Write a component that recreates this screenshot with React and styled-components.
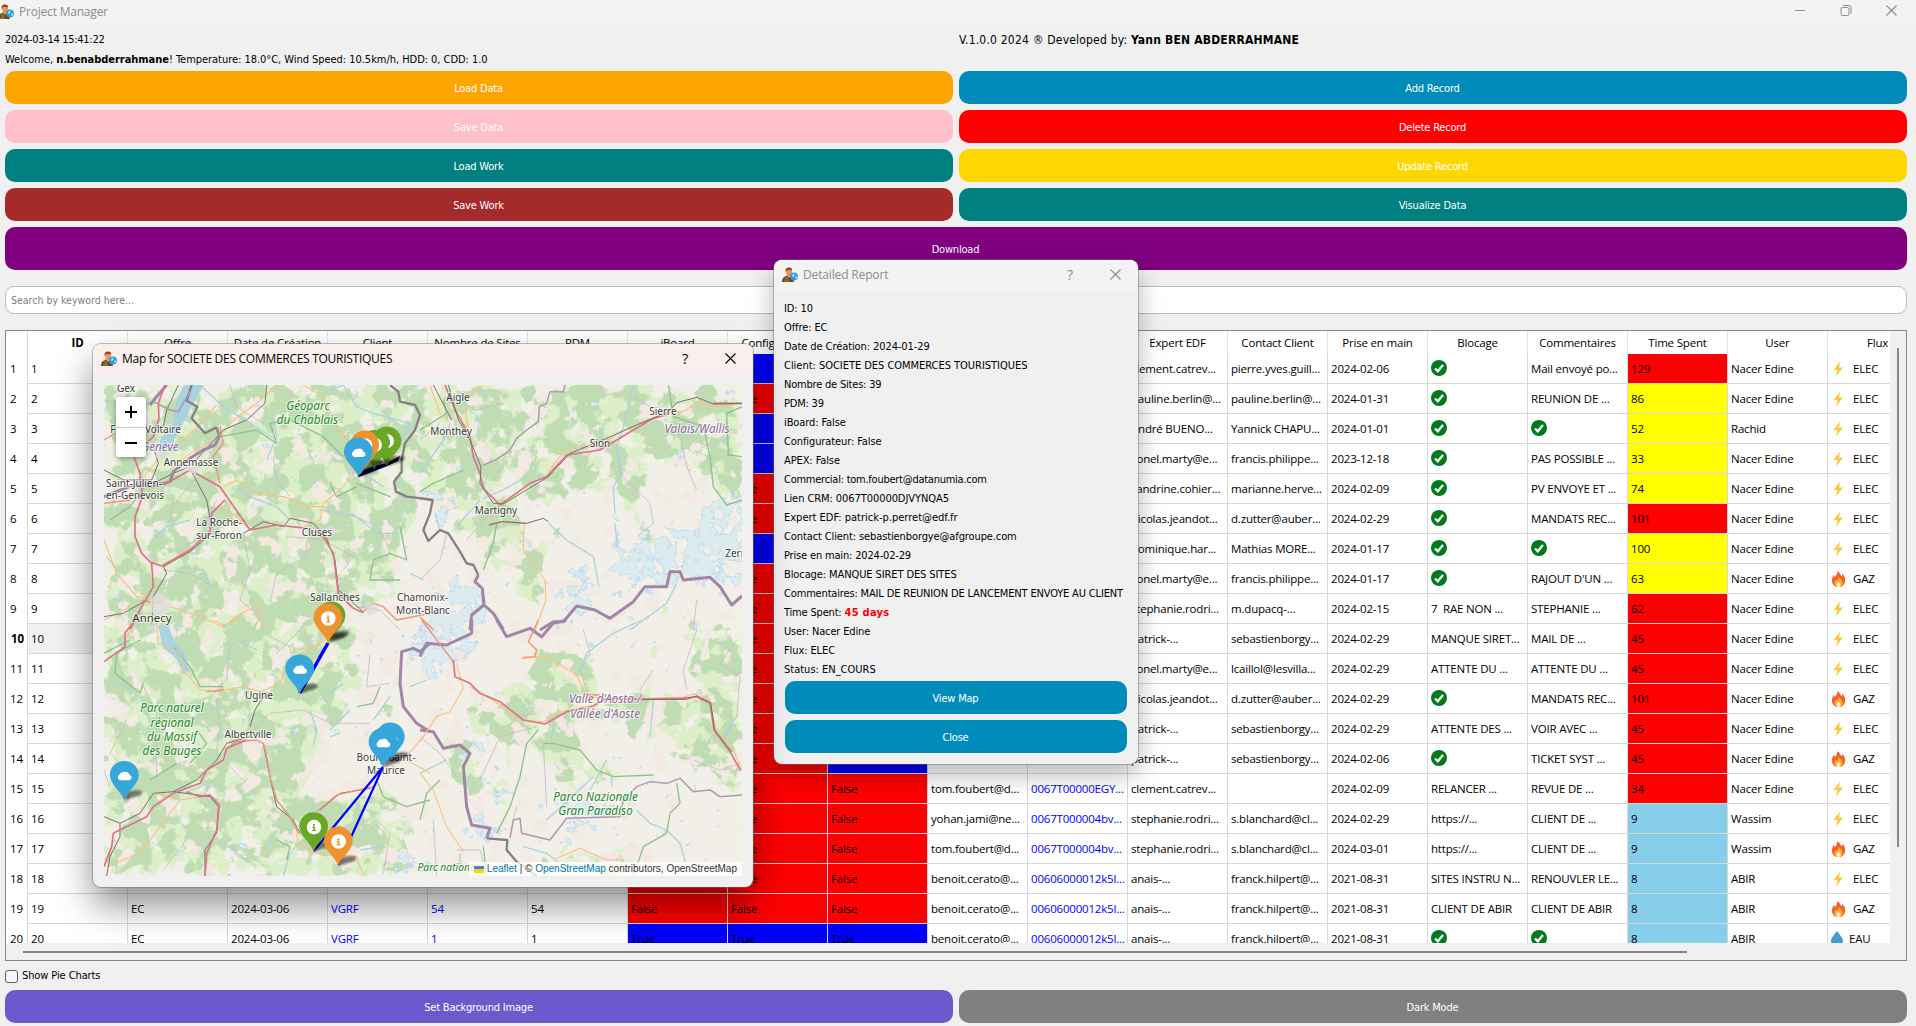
import React from "react";
import styled, { createGlobalStyle } from "styled-components";

const tahoma = `"DejaVu Sans Condensed", "DejaVu Sans", sans-serif`;
const segoe = `"Open Sans", "Noto Sans", sans-serif`;

const GlobalStyle = createGlobalStyle`
  * { box-sizing: border-box; }
  body { margin: 0; background: #f0f0f0; overflow: hidden; }
`;

/* ---------- window ---------- */
const Window = styled.div`
  position: relative;
  width: 1916px;
  height: 1026px;
  display: flex;
  flex-direction: column;
  overflow: hidden;
  background: #f0f0f0;
  color: #000;
  font: 11px/18px ${tahoma};
  letter-spacing: -0.3px;
  white-space: nowrap;
`;
const TitleBar = styled.header`
  height: 23px;
  flex: none;
  display: flex;
  align-items: center;
  background: #f3f3f3;
  color: #8c8c8c;
  font: 12px/22px ${segoe};
  letter-spacing: -0.2px;
`;
const TitleIcon = styled.span`
  display: flex;
  margin: 0 5px 0 -2px;
`;
const TitleText = styled.span`
  flex: 1;
`;
const WindowButtons = styled.div`
  display: flex;
  gap: 34px;
  padding: 0 19px 3px 0;
`;
const Content = styled.main`
  display: flex;
  flex-direction: column;
  padding: 8px 9px 3px 5px;
`;
const InfoGrid = styled.div`
  display: grid;
  grid-template-columns: 1fr 1fr;
  grid-template-rows: 20px 20px;
  column-gap: 6px;
  height: 40px;
`;
const Info = styled.div`
  line-height: 18px;
`;
const Welcome = styled(Info)`
  letter-spacing: -0.04px;
`;
const Version = styled(Info)`
  font-size: 12px;
  letter-spacing: 0.2px;
`;
const ButtonGrid = styled.div`
  display: grid;
  grid-template-columns: 1fr 1fr;
  gap: 6px;
`;
const Button = styled.button`
  height: ${(p) => p.$h || 33}px;
  grid-column: ${(p) => (p.$wide ? "1 / -1" : "auto")};
  border: 0;
  padding: 2px 1px 0 0;
  border-radius: 10px;
  background: ${(p) => p.$bg};
  color: #fff;
  font: 11px/18px ${tahoma};
  letter-spacing: -0.2px;
`;
const Search = styled.div`
  height: 28px;
  margin: 16px 0;
  padding: 0 5px;
  display: flex;
  align-items: center;
  border: 1px solid #bdbdbd;
  border-radius: 9px;
  background: #fff;
  color: #808080;
  font-size: 10.5px;
  letter-spacing: 0;
`;

/* ---------- table ---------- */
const TableFrame = styled.section`
  height: 631px;
  border: 1px solid #828790;
  display: grid;
  grid-template-columns: 1884px 1fr;
  grid-template-rows: 612px 1fr;
`;
const Viewport = styled.div`
  overflow: hidden;
  background: #fff;
  font: 11.5px/26px ${segoe};
  letter-spacing: -0.19px;
`;
const VScroll = styled.div`
  display: flex;
  justify-content: flex-start;
  padding: 17px 0 0 7px;
`;
const VThumb = styled.i`
  width: 2px;
  height: 499px;
  background: #868686;
`;
const HScroll = styled.div`
  padding: 8px 0 0 17px;
`;
const HThumb = styled.i`
  display: block;
  width: 1664px;
  height: 2px;
  background: #868686;
`;
const Row = styled.div`
  display: flex;
  width: 1922px;
  height: ${(p) => (p.$head ? 23 : 30)}px;
`;
const RowNumber = styled.div`
  width: 22px;
  padding-top: 2px;
  border-right: 1px solid #d8d8d8;
  font-weight: ${(p) => (p.$bold ? 700 : 400)};
  padding-left: ${(p) => (p.$bold ? 5 : 4)}px;
`;
const HeadCell = styled.div`
  width: 100px;
  border-right: 1px solid #e5e5e5;
  text-align: center;
  line-height: 24px;
  font-weight: ${(p) => (p.$bold ? 700 : 400)};
`;
const Cell = styled.div`
  width: 100px;
  padding: 1.500px 0 0 3px;
  border-right: 1px solid #d8d8d8;
  border-bottom: 1px solid #d8d8d8;
  background: ${(p) => p.$bg || "transparent"};
  color: ${(p) => (p.$link ? "#0000ff" : "#000")};
  overflow: hidden;
  white-space: pre;
`;
const FluxCell = styled(Cell)`
  display: flex;
  align-items: center;
  padding-top: 0;
  gap: ${(p) => (p.$tight ? 6 : 7)}px;
`;
const CheckMark = styled.span`
  display: flex;
  height: 25px;
  align-items: center;
`;

/* ---------- footer ---------- */
const CheckRow = styled.label`
  height: 29px;
  display: flex;
  align-items: center;
  gap: 4px;
  padding-top: 1px;
  letter-spacing: -0.1px;
`;
const Box = styled.span`
  width: 13px;
  height: 13px;
  border: 1px solid #5c5c5c;
  border-radius: 3px;
  background: #f5f5f5;
`;

/* ---------- dialogs ---------- */
const Dialog = styled.section`
  position: absolute;
  left: ${(p) => p.$x}px;
  top: ${(p) => p.$y}px;
  width: ${(p) => p.$w}px;
  height: ${(p) => p.$h}px;
  border-radius: 8px;
  overflow: hidden;
  background: #f0f0f0;
  box-shadow: 0 0 0 1px rgba(110, 110, 110, 0.45), ${(p) => p.$shadow};
`;
const DialogBar = styled.header`
  height: 30px;
  display: flex;
  align-items: center;
  padding: 0 17px 1px 8px;
  background: ${(p) => (p.$active ? "#f9f0ee" : "#f3f3f3")};
  color: ${(p) => (p.$active ? "#000" : "#8c8c8c")};
  font: 12px/28px ${segoe};
  letter-spacing: ${(p) => (p.$active ? "-0.28px" : "-0.15px")};
`;
const DialogTitle = styled.span`
  flex: 1;
  padding-left: 5px;
`;
const Help = styled.span`
  font-size: 14px;
  margin-right: 37px;
`;
const MapBody = styled.div`
  padding: 11px;
`;
const MapView = styled.div`
  position: relative;
  width: 638px;
  height: 491px;
  overflow: hidden;
`;
const ZoomBox = styled.div`
  position: absolute;
  left: 12px;
  top: 12px;
  width: 30px;
  display: grid;
  grid-template-rows: 30px 30px;
  border-radius: 3px;
  background: #fff;
  box-shadow: 0 1px 5px rgba(0, 0, 0, 0.4);
`;
const ZoomKey = styled.span`
  display: grid;
  place-items: center;
  & + & { border-top: 1px solid #ccc; }
`;
const Attribution = styled.div`
  position: absolute;
  right: 0;
  bottom: 0;
  height: 14px;
  padding: 0 5px;
  display: flex;
  align-items: center;
  background: rgba(255, 255, 255, 0.8);
  color: #333;
  font: 10px/14px "Liberation Sans", Arial, sans-serif;
  letter-spacing: 0;
  white-space: pre;
`;
const Flag = styled.i`
  width: 10px;
  height: 7px;
  margin-right: 3px;
  background: linear-gradient(#4c7be1 50%, #ffd500 50%);
`;
const Anchor = styled.span`
  color: #0078a8;
`;
const ReportBody = styled.div`
  display: flex;
  flex-direction: column;
  padding: 9px 11px 11px;
`;
const ReportLine = styled.div`
  height: 19px;
  line-height: 19px;
  margin-left: -1px;
  letter-spacing: ${(p) => p.$ls}px;
`;
const Days = styled.b`
  color: #ff0000;
  letter-spacing: 0.3px;
`;
const Actions = styled.div`
  display: grid;
  gap: 6px;
  padding-top: 2px;
`;

/* ---------- icons ---------- */
const AppIcon = () => (
  <svg width="16" height="16" viewBox="0 0 16 16">
    <path d="M0 15c0-3 1-5 4-6l2-1 4 1 2 6H0z" fill="#6b4420" />
    <path d="M3 10l3-1 1 6H2z" fill="#8a6b2c" />
    <path d="M5 8l2 3 2-2V7H5z" fill="#d9a06c" />
    <path d="M4 4c0-2 1.500-3 3-3s3 1 3 3-1 5-3 5-3-3-3-5z" fill="#e8955a" />
    <path d="M3.800 5C3 2 4.500.6 7 .5c2 0 3.500 1 3.200 3L8 3 5 3z" fill="#a23c1a" />
    <circle cx="12" cy="9.500" r="3.900" fill="#2e9bd6" />
    <path d="M10 8l2-1.500 1 1-1 2-2 .5zM13 10l2-1v2l-2 1z" fill="#9fdcf5" />
  </svg>
);
const CloseIcon = ({ color }) => (
  <svg width="11" height="11" viewBox="0 0 11 11">
    <path d="M.5.5l10 10M10.500.5l-10 10" stroke={color} strokeWidth="1.100" />
  </svg>
);
const Ok = () => (
  <CheckMark>
    <svg width="16" height="16" viewBox="0 0 16 16">
      <circle cx="8" cy="8" r="8" fill="#007a1c" />
      <path d="M4 8.500l2.800 2.800L12 5" fill="none" stroke="#fff" strokeWidth="2.300" />
    </svg>
  </CheckMark>
);
const FluxIcon = ({ kind }) => {
  if (kind === "ELEC")
    return (
      <svg width="15" height="16" viewBox="0 0 15 16">
        <path d="M9 .5L2.500 9h4L5 15.500 12 6.500H8z" fill="#ffc83d" />
      </svg>
    );
  if (kind === "GAZ")
    return (
      <svg width="15" height="16" viewBox="0 0 15 16">
        <path d="M6 .3c3 1 3 3.200 4.500 5 .8-.5.800-1.500.500-2.500C14 5 14.500 8 14 10.500 13.500 14 11 16 7.500 16S1.500 14 1 10.500C.6 7.500 2 6 2.300 4c1 .5 1.400 1.300 1.500 2.200C5.500 4.500 6.600 2.500 6 .3z" fill="#f3622a" />
        <path d="M7.500 6c2.500 2 4 3.500 4 6 0 2.300-1.500 4-4 4s-4-1.700-4-4c0-1.500.5-2.500 1.300-3.500.4.800.7 1.200 1.300 1.500C7 9 7.700 7.500 7.500 6z" fill="#ffb02e" />
        <path d="M7.500 11c1.300 1 2 2 2 3s-.8 2-2 2-2-1-2-2 .7-2 2-3z" fill="#fff1c9" />
      </svg>
    );
  return (
    <svg width="12" height="16" viewBox="0 0 12 16">
      <path d="M6 0c3 4 6 7 6 10a6 6 0 0 1-12 0C0 7 3 4 6 0z" fill="#3f9fd0" />
    </svg>
  );
};

/* ---------- map ---------- */
const inks = {
  motorway: ["#e0708a", 5],
  trunk: ["#f28f77", 4],
  primary: ["#fac183", 3.5],
  minor: ["#c3bdc0", 2.5],
  rail: ["#77706f", 3],
  river: ["#aad3df", 4],
  border: ["#a187a5", 9],
  thinBorder: ["#ae98b3", 4.5],
  limit: ["#858085", 7],
  park: ["#8fc28a", 4],
};
const Lines = ({ kind, d }) => (
  <path d={d} fill="none" stroke={inks[kind][0]} strokeWidth={inks[kind][1]} strokeLinejoin="round" />
);
const Tile = ({ x, y, children }) => <g transform={`translate(${x} ${y}) scale(.33333)`}>{children}</g>;

const places = [
  ["Gex", 126, 392], ["Annemasse", 191, 466], ["Saint-Julien-", 134, 487], ["en-Genevois", 135, 499],
  ["La Roche-", 219, 526], ["sur-Foron", 219, 538.5], ["Cluses", 317, 536], ["Sallanches", 335, 601],
  ["Annecy", 152, 621.500, 11.5], ["Chamonix-", 422.500, 601], ["Mont-Blanc", 423, 613.5], ["Aigle", 458, 401],
  ["Monthey", 451, 435], ["Martigny", 496, 514], ["Sion", 600, 446.500], ["Sierre", 663, 414.500],
  ["Zermatt", 744, 556.500], ["Ugine", 259, 699], ["Albertville", 248, 737.500],
  ["Bourg-Saint-", 386, 761], ["Maurice", 386, 773.5],
];
const regions = [
  ["Géoparc", 308, 410, "#1e8b28"], ["du Chablais", 307.5, 424, "#1e8b28"],
  ["Parc naturel", 172, 712, "#1e8b28"], ["régional", 172, 726.500, "#1e8b28"], ["du Massif", 172, 741, "#1e8b28"], ["des Bauges", 172, 755, "#1e8b28"],
  ["Parco Nazionale", 595.5, 800.500, "#1e8b28"], ["Gran Paradiso", 595.5, 815, "#1e8b28"],
  ["Genève", 160, 451, "#8d6a9b"], ["Valais/Wallis", 697, 433, "#8d6a9b"],
  ["Valle d'Aosta /", 605, 703, "#8d6a9b"], ["Vallée d'Aoste", 605, 718, "#8d6a9b"],
  ["Parc national", 448, 871, "#1e8b28", 10.3],
];
const pins = [
  [387, 466, "#6ba624", "moon"], [374.3, 469.300, "#6ba624", "info"], [364.700, 470, "#ee9230", "info"], [358.300, 477, "#37a6db", "cloud"],
  [331, 640.800, "#6ba624", "info"], [328, 643, "#ee9230", "info"],
  [299.700, 693.800, "#37a6db", "cloud"], [124.3, 800.3, "#37a6db", "cloud"],
  [390.300, 762, "#37a6db", "cloud"], [383, 767.3, "#37a6db", "cloud"],
  [313.7, 851.600, "#6ba624", "info"], [338.300, 866, "#ee9230", "info"],
];
const Pin = ({ x, y, color, glyph }) => (
  <g transform={`translate(${x} ${y})`}>
    <path d="M0 0L16-5Q21-9 14-10L3-9Z" fill="#000" opacity=".5" filter="url(#soft)" />
    <path d="M0 0C-3-9-14.400-16-14.400-25A14.400 14.400 0 0 1 14.400-25C14.400-16 3-9 0 0Z" fill={color} />
    {glyph === "cloud" && <path d="M-4-20a3 3 0 0 1-1-5.500 3.500 3.500 0 0 1 4-2.500 4 4 0 0 1 6 2.500 2.800 2.800 0 0 1 0 5.500z" fill="#fff" />}
    {glyph === "info" && (
      <>
        <circle cx=".3" cy="-24.5" r="7.300" fill="#fff" />
        <path d="M-.8-27.500h2v1.700h-2zM-1.500-25.200h2.700v3.500h1.100v1.200h-3.900v-1.200h1.100v-2.300h-1z" fill={color} />
      </>
    )}
    {glyph === "moon" && <path d="M0-32a7 7 0 0 1 0 14q4-3 3-7t-3-7z" fill="#fff" />}
  </g>
);
const Terrain = ({ id, seed, freq, density, color }) => (
  <filter id={id} x="0" y="0" width="100%" height="100%" colorInterpolationFilters="sRGB">
    <feTurbulence type="fractalNoise" baseFrequency={freq} numOctaves="5" seed={seed} result="n" />
    <feGaussianBlur in="SourceAlpha" stdDeviation="7" result="s" />
    <feComposite in="n" in2="s" operator="arithmetic" k1="0" k2=".8" k3=".3" k4="0" />
    <feComponentTransfer result="t">
      <feFuncA type="linear" slope="22" intercept={-22 * density} />
    </feComponentTransfer>
    <feFlood floodColor={color} />
    <feComposite in2="t" operator="in" />
  </filter>
);
const Frame = () => <rect x="104" y="385" width="638" height="491" fill="none" />;
const west = "M104 385H425L440 430 400 470 420 500 400 560 395 600 355 620 350 660 385 680 350 700 320 760 300 790 340 800 375 770 400 800 420 876H104Z";
const alps = "M430 385H742V500L700 480 660 460 640 490 655 560 640 545 610 480 570 500 510 500 550 560 540 610 500 570 470 540 440 520 415 470Z";
const aosta = "M455 700L520 690 540 640 590 660 600 700 650 690 690 690 690 620 742 620V800L680 760 650 730 570 720 600 760 640 790 560 780 520 740 500 830 490 790 510 740 470 730Z M550 860L640 850 640 876H540Z M440 740L480 740 480 800 450 790Z";
const ice = "M440 590L475 570 490 600 475 650 440 680 415 670 400 640 420 620Z M560 570L590 565 595 610 565 625Z M610 550L690 520 742 480 742 590 680 580 650 590 615 580Z M460 740H480V760H465Z M560 800H620V815L560 840Z M480 815L500 825 495 845 462 840Z M490 790H510V803H485Z M410 850L440 860 410 876H385Z M430 480L450 490 445 530 425 520Z";

const MapDrawing = () => (
  <svg width="638" height="491" viewBox="104 385 638 491">
    <defs>
      <Terrain id="meadow" seed="4" freq=".05" density={0.62} color="#dcefc8" />
      <Terrain id="forest" seed="11" freq=".04" density={0.655} color="#c0dcb3" />
      <Terrain id="iceEdge" seed="21" freq=".08" density={0.615} color="#a3cdf5" />
      <Terrain id="iceFill" seed="21" freq=".08" density={0.635} color="#dcebee" />
      <Terrain id="rock" seed="31" freq=".045" density={0.79} color="#f2e9e2" />
      <filter id="soft" x="-30%" y="-30%" width="160%" height="160%"><feGaussianBlur stdDeviation="1.300" /></filter>
    </defs>
    <rect x="104" y="385" width="638" height="491" fill="#f2efe9" />
    {["meadow", "forest"].map((f) => (
      <g key={f} filter={`url(#${f})`}>
        <Frame />
        <path d={`${west}${alps}${aosta}`} />
      </g>
    ))}
    <g filter="url(#rock)"><Frame /><rect x="104" y="385" width="638" height="491" /></g>
    <g filter="url(#iceEdge)"><Frame /><path d={ice} /></g>
    <g filter="url(#iceFill)"><Frame /><path d={ice} /></g>

    <path d="M184 385L176 402 172 425 160 440 158 455 170 447 182 425 194 402 204 385Z" fill="#aad3df" />
    <path d="M158 625L163 648 176 658 183 672 189 671 186 655 174 640 168 625Z" fill="#aad3df" />

    <Tile x={90} y={340}>
      <Lines kind="minor" d="M42 180L90 190 150 260M160 410L110 500 60 540M420 135L440 200 520 250M260 640L330 590 380 480M460 580L480 690 450 780 510 830 490 870M310 420L240 510 250 560M600 470L560 420 550 350M370 740L300 700 220 690M650 600L650 650 560 700 540 790M700 600L790 650 760 690M110 800L170 830 130 870M800 800L870 810 930 870M590 590L720 600M780 520L860 560 890 610" />
      <Lines kind="river" d="M190 600L230 560 300 540M330 135L400 200 560 300M700 160L760 135 800 200 850 220 960 250 930 310M600 540L560 500 480 470 440 440M690 510L800 530 860 580 930 580M270 680L340 690 360 730M530 360L560 290 550 240M820 400L880 440M50 650L90 700M960 700L1000 720" />
      <Lines kind="park" d="M390 290L500 270 560 310 540 250 600 240 700 290 760 350M800 440L740 470 720 430M930 720L840 720 850 660 900 640 950 660 930 560M800 430L900 470 850 450M180 420L120 500 60 540" />
      <Lines kind="primary" d="M560 135L500 190 430 240 380 300 300 340 240 390M380 195L330 250 280 300 220 340 160 410M640 135L700 170 740 260 790 320 800 390 760 440 700 490 690 540 640 560M400 440L440 420 500 460 580 470 660 500 720 500M480 570L440 530 390 500M42 600L80 700 140 770 200 780 240 800M240 800L330 830 400 860 440 830 500 795 520 870M42 840L120 800M220 680L260 650 340 600" />
      <Lines kind="trunk" d="M155 780L200 790 230 770M820 815L850 790 880 800 920 840 1020 820M390 260L400 310 370 350 390 430M42 490L120 480M42 300L110 260" />
      <Lines kind="rail" d="M530 135L525 190 470 240 400 270 300 380 250 400 190 430M190 320L205 370 185 420 100 420 42 390M300 385L350 480 365 560M460 580L520 545 580 560 600 535 670 550 710 595 735 660 745 750 820 815M265 135L230 210 220 260M185 850L190 770 230 700 220 680 300 635 365 580M42 830L100 820 170 780" />
      <Lines kind="border" d="M230 135L200 170 180 195M300 355L340 330 375 315 388 290 380 262M300 355L250 395 240 425 190 440 130 435 42 470" />
      <Lines kind="limit" d="M305 135L290 182 322 200 305 235 345 280 380 262M900 135L925 155 930 185 975 195 990 225 975 270 945 310 935 360 935 395 912 425 918 455 950 470 1020 478" />
      <Lines kind="thinBorder" d="M190 185L240 210 265 215 300 155" />
      <Lines kind="motorway" d="M225 135L205 190 207 235 190 290 130 345 150 400 157 470 135 530 135 590 155 640 185 670 190 740 155 800 120 870M157 430L230 430 300 390 390 440 480 570 560 555 650 565 700 590 730 640 745 760 790 805 820 818M405 480L365 520 360 575 300 630 215 678 185 668" />
    </Tile>
    <Tile x={420} y={340}>
      <Lines kind="minor" d="M250 190L170 210 130 190M590 320L600 400 690 490 700 550 650 590M770 250L800 380 830 450M0 300L60 250M140 600L210 520M520 330L470 380M640 170L740 230M80 580L60 660 0 720M830 780L820 870" />
      <Lines kind="river" d="M640 135L610 260 590 320 605 400 580 440 585 520M190 475L250 450 320 410M385 550L440 600 520 650 537 740M0 400L70 300 90 250M585 550L592 620M550 250L540 330M110 560L180 480M770 730L740 790 630 870M180 380L140 340M45 520L60 570M910 300L930 330 920 350" />
      <Lines kind="park" d="M745 135L760 230 850 260 870 350 880 440 920 495 966 480M966 350L925 345 920 220 966 200M0 455L40 430 130 390M230 550L220 610 190 690M0 270L80 220 70 180" />
      <Lines kind="thinBorder" d="M435 135L430 155 390 155 380 190 358 200 355 245 320 270 290 295 270 330 230 358 190 375" />
      <Lines kind="limit" d="M0 475L38 480 30 520 10 570 25 603 60 570 85 580 120 635 140 670 160 675 175 705" />
      <Lines kind="border" d="M175 705L165 725 187 745 192 795 155 825 150 870M192 795L220 820 250 868M360 870L400 845 430 845 470 798 525 810 570 835 640 785 675 740 740 740 750 695 780 695 790 720 870 712 900 740 935 795 966 768" />
      <Lines kind="primary" d="M30 135L60 220 90 245M135 200L145 270M190 135L130 180M385 395L440 325 540 320 600 275 660 250 730 225 800 210 830 185 880 200 966 190M312 548L310 630 375 720 378 780 345 870M210 540L245 480" />
      <Lines kind="trunk" d="M207 555L245 545 320 550M0 830L40 870" />
      <Lines kind="motorway" d="M75 135L105 210 150 290 160 350 180 400 190 445 240 495 330 430 380 410 440 345 540 330 640 270 700 235 745 222M880 190L966 190" />
      <Lines kind="rail" d="M40 135L95 240M85 135L115 240 150 300 183 380 180 430 220 490 250 492 385 410 450 340 560 295 650 255 745 215 770 188 830 172 880 192 966 190M207 555L245 545 320 550 370 535 385 545" />
    </Tile>
    <Tile x={90} y={620}>
      <Lines kind="minor" d="M110 300L60 400 100 440M160 200L200 280 200 480M380 240L390 330 380 390M540 50L600 80 610 150M420 60L410 180 370 220M490 330L540 280 640 270 720 310 840 310M290 660L220 750M560 100L640 20M600 700L640 660 700 700M820 560L900 640 880 760M840 100L830 200 900 190M60 500L42 450M380 400L460 480M430 700L500 740" />
      <Lines kind="river" d="M75 180L150 230 190 330M660 270L680 330 670 380M690 240L760 190M720 330L780 270M850 300L900 230M440 60L500 90M525 390L540 470M600 700L580 768M810 690L880 680M960 200L1010 180M280 520L380 480M390 660L470 720M750 340L720 350" />
      <Lines kind="park" d="M250 80L300 140 330 200 400 200M320 330L350 370 300 430M150 60L80 100 75 160 150 220 160 190M800 260L850 250 870 200M860 480L880 530 950 560 1020 540M560 660L600 680 590 720M42 100L120 60M260 430L180 480" />
      <Lines kind="border" d="M1020 70L990 95 970 85 935 95 930 190 940 260 980 310 1020 335" />
      <Lines kind="primary" d="M200 0L205 70 270 100 280 150 330 210 380 215 460 200 510 215 570 190 590 140M370 0L400 15 450 0M620 110L720 50M130 20L100 60M50 740L150 700 270 540 200 520M270 540L330 530M620 640L625 670 680 700 800 710 820 768M950 420L1020 460M940 420L1000 350M42 720L60 700M700 0L750 20" />
      <Lines kind="rail" d="M42 590L90 610 150 580 190 520 250 515 320 480 380 420 410 370 480 350M90 610L90 650 60 710 50 768M250 515L360 530 385 560 380 640 345 690 345 768M480 320L495 270 520 230M520 370L540 470 560 560 610 600 630 640M690 570L750 520 840 505" />
      <Lines kind="trunk" d="M410 385L440 365 500 360 520 370 530 410 540 470 560 540 600 590 625 640M680 575L740 525 850 500M350 215L400 210" />
      <Lines kind="motorway" d="M135 0L105 40 105 80 42 125M42 740L65 680 70 640 100 625 170 590 190 560 250 520 330 490 350 450 400 420 410 385 470 360M290 515L330 530 360 525 388 555 380 630 350 700 345 768" />
    </Tile>
    <Tile x={420} y={620}>
      <Lines kind="minor" d="M350 320L240 350 180 480M370 370L380 560M500 210L480 150 510 100 490 30M800 210L790 150 830 30M660 210L700 150M950 60L900 130 960 170 950 290 910 360M0 350L60 400 110 470M820 420L900 450 960 430M290 290L350 280M40 600L50 768M290 560L280 600M110 690L180 690 200 768" />
      <Lines kind="river" d="M665 0L580 40 500 100 480 150M700 240L690 350M910 350L940 300M510 510L560 420M575 470L575 500M650 570L690 610 740 630 780 670 800 740M310 680L380 700 420 730M0 460L80 420M400 320L395 360M120 700L120 740M380 600L520 470" />
      <Lines kind="park" d="M370 370L400 370 480 390 530 450 580 470 700 465M355 330L320 370 300 470 270 560 230 640M770 490L780 550 750 580 740 640 670 680 640 768M0 600L20 520 60 480M200 768L190 680" />
      <Lines kind="border" d="M155 0L155 40 80 75 20 70 0 110M230 0L260 50 330 25 365 50 400 10 440 0M0 330L40 335 70 385 120 375 150 400 130 440 140 560 155 615 210 625 200 655" />
      <Lines kind="limit" d="M200 655L262 660 260 690 290 725 350 768" />
      <Lines kind="thinBorder" d="M270 655L280 600 300 595 305 640 390 660 440 595 600 590 610 540 650 500 690 485 740 490 780 475 820 515 870 510 900 530 966 525" />
      <Lines kind="primary" d="M0 365L50 290 90 275 130 205 110 130M150 200L250 260 290 300 370 305 440 270M310 110L390 115 470 165 500 230 560 235M0 460L40 510 80 620 130 695M690 235L790 232 820 222 870 240 885 320 940 390 966 450M400 720L480 685 560 720 610 718" />
      <Lines kind="trunk" d="M5 0L100 125M355 0L325 65 350 90 345 110 305 115M500 225L540 225" />
      <Lines kind="motorway" d="M100 120L105 170 150 190 180 220 240 245 310 300 375 312 440 275 520 258 560 235 670 238 790 235 830 230 870 250 882 330 930 395 962 452" />
      <Lines kind="rail" d="M670 238L800 238 830 228 872 248 884 330 935 395" />
    </Tile>
    <g fill="#dfdcdc">
      <path d="M150 600l8-8 10 4 3 12-10 8-10-4zM183 460l10 2 8 6-6 6-10-4zM158 450l10 4-4 6-8-3zM320 530l12-4 8 6-12 4zM365 600l10 4 3 8-10 4z" opacity=".8" />
    </g>

    <g fontFamily="'Noto Sans', 'Open Sans', sans-serif" textAnchor="middle" stroke="#fff" strokeOpacity=".65" strokeWidth="2.200" paintOrder="stroke" strokeLinejoin="round" letterSpacing="0">
      {regions.map(([t, x, y, c, s]) => <text key={t} x={x} y={y} fontSize={s || 11.7} fontStyle="italic" fill={c}>{t}</text>)}
      {places.map(([t, x, y, s]) => <text key={t} x={x} y={y} fontSize={s || 10} fill="#3c3c3c">{t}</text>)}
      <text x="145.500" y="433" fontSize="10" fill="#3c3c3c">Ferney-Voltaire</text>
    </g>

    <g stroke="#0000ff" strokeWidth="2.200" fill="none">
      <path d="M358 476L387 465M383 767L313.700 851M383 767L338.300 865" />
      <path d="M328 643L299.700 693" strokeWidth="3.500" />
    </g>
    <path d="M358.300 477L364 470 374 466 387 463 400 456 398 461 387 466Z" fill="#00003c" />
    {pins.map(([x, y, c, g], i) => <Pin key={i} x={x} y={y} color={c} glyph={g} />)}
  </svg>
);

/* ---------- data ---------- */
const actions = [
  ["Load Data", "#ffa500"], ["Add Record", "#008cba"],
  ["Save Data", "#ffc0cb"], ["Delete Record", "#ff0000"],
  ["Load Work", "#008080"], ["Update Record", "#ffd700"],
  ["Save Work", "#a52a2a"], ["Visualize Data", "#008080"],
];
const columns = ["ID", "Offre", "Date de Création", "Client", "Nombre de Sites", "PDM", "iBoard", "Configurateur", "APEX", "Commercial", "Lien CRM", "Expert EDF", "Contact Client", "Prise en main", "Blocage", "Commentaires", "Time Spent", "User", "Flux"];
const OK = "ok";
const N = "Nacer Edine";
const R = "#ff0000", Y = "#ffff00", S = "#87ceeb";
const anais = ["benoit.cerato@...", "00606000012k5l...", "anais-...", "franck.hilpert@..."];
/* configurateur, apex, commercial, crm, expert, contact, prise, blocage, commentaires, days, colour, user, flux */
const records = [
  [1, 0, "", "", "clement.catrev...", "pierre.yves.guill...", "2024-02-06", OK, "Mail envoyé po...", 129, R, N, "ELEC"],
  [0, 0, "", "", "pauline.berlin@...", "pauline.berlin@...", "2024-01-31", OK, "REUNION DE ...", 86, Y, N, "ELEC"],
  [1, 0, "", "", "André BUENO...", "Yannick CHAPU...", "2024-01-01", OK, OK, 52, Y, "Rachid", "ELEC"],
  [1, 0, "", "", "lionel.marty@e...", "francis.philippe...", "2023-12-18", OK, "PAS POSSIBLE ...", 33, Y, N, "ELEC"],
  [0, 0, "", "", "sandrine.cohier...", "marianne.herve...", "2024-02-09", OK, "PV ENVOYE ET ...", 74, Y, N, "ELEC"],
  [0, 0, "", "", "nicolas.jeandot...", "d.zutter@auber...", "2024-02-29", OK, "MANDATS REC...", 101, R, N, "ELEC"],
  [1, 0, "", "", "dominique.har...", "Mathias MORE...", "2024-01-17", OK, OK, 100, Y, N, "ELEC"],
  [0, 0, "", "", "lionel.marty@e...", "francis.philippe...", "2024-01-17", OK, "RAJOUT D'UN ...", 63, Y, N, "GAZ"],
  [0, 0, "", "", "stephanie.rodri...", "m.dupacq-...", "2024-02-15", "7  RAE NON ...", "STEPHANIE ...", 62, R, N, "ELEC"],
  [0, 0, "", "", "patrick-...", "sebastienborgy...", "2024-02-29", "MANQUE SIRET...", "MAIL DE ...", 45, R, N, "ELEC"],
  [0, 0, "", "", "lionel.marty@e...", "lcaillol@lesvilla...", "2024-02-29", "ATTENTE DU ...", "ATTENTE DU ...", 45, R, N, "ELEC"],
  [0, 0, "", "", "nicolas.jeandot...", "d.zutter@auber...", "2024-02-29", OK, "MANDATS REC...", 101, R, N, "GAZ"],
  [0, 0, "", "", "patrick-...", "sebastienborgy...", "2024-02-29", "ATTENTE DES ...", "VOIR AVEC ...", 45, R, N, "ELEC"],
  [0, 1, "", "", "patrick-...", "sebastienborgy...", "2024-02-06", OK, "TICKET SYST ...", 45, R, N, "GAZ"],
  [0, 0, "tom.foubert@d...", "0067T00000EGY...", "clement.catrev...", "", "2024-02-09", "RELANCER ...", "REVUE DE ...", 34, R, N, "ELEC"],
  [0, 0, "yohan.jami@ne...", "0067T000004bv...", "stephanie.rodri...", "s.blanchard@cl...", "2024-02-29", "https://...", "CLIENT DE ...", 9, S, "Wassim", "ELEC"],
  [0, 0, "tom.foubert@d...", "0067T000004bv...", "stephanie.rodri...", "s.blanchard@cl...", "2024-03-01", "https://...", "CLIENT DE ...", 9, S, "Wassim", "GAZ"],
  [0, 0, ...anais, "2021-08-31", "SITES INSTRU N...", "RENOUVLER LE...", 8, S, "ABIR", "ELEC"],
  [0, 0, ...anais, "2021-08-31", "CLIENT DE ABIR", "CLIENT DE ABIR", 8, S, "ABIR", "GAZ"],
  [1, 1, ...anais, "2021-08-31", OK, OK, 8, S, "ABIR", "EAU"],
];
const sites = { 19: "54", 20: "1" };
const BoolCell = ({ on }) => <Cell $bg={on ? "#0000ff" : "#ff0000"}>{on ? "True" : "False"}</Cell>;

const Record = ({ n, r }) => {
  const [conf, apex, com, crm, expert, contact, prise, bloc, comment, days, tone, user, flux] = r;
  const shown = n > 18;
  return (
    <Row>
      <RowNumber $bold={n === 10}>{n}</RowNumber>
      <Cell $bg={n === 10 ? "#f0f0f0" : undefined}>{n}</Cell>
      <Cell>{shown && "EC"}</Cell>
      <Cell>{shown && "2024-03-06"}</Cell>
      <Cell $link>{shown && "VGRF"}</Cell>
      <Cell $link>{sites[n]}</Cell>
      <Cell>{sites[n]}</Cell>
      <BoolCell on={n === 20} />
      <BoolCell on={conf} />
      <BoolCell on={apex} />
      <Cell>{com}</Cell>
      <Cell $link>{crm}</Cell>
      <Cell>{expert}</Cell>
      <Cell>{contact}</Cell>
      <Cell>{prise}</Cell>
      <Cell>{bloc === OK ? <Ok /> : bloc}</Cell>
      <Cell>{comment === OK ? <Ok /> : comment}</Cell>
      <Cell $bg={tone}>{days}</Cell>
      <Cell>{user}</Cell>
      <FluxCell $tight={flux === "EAU"}><FluxIcon kind={flux} />{flux}</FluxCell>
    </Row>
  );
};

const report = [
  ["ID: 10", -0.1], ["Offre: EC", -0.1], ["Date de Création: 2024-01-29", -0.09], ["Client: SOCIETE DES COMMERCES TOURISTIQUES", -0.03],
  ["Nombre de Sites: 39", -0.2], ["PDM: 39", -0.2], ["iBoard: False", -0.1], ["Configurateur: False", -0.1], ["APEX: False", -0.1],
  ["Commercial: tom.foubert@datanumia.com", -0.25], ["Lien CRM: 0067T00000DJVYNQA5", -0.07], ["Expert EDF: patrick-p.perret@edf.fr", 0],
  ["Contact Client: sebastienborgye@afgroupe.com", -0.11], ["Prise en main: 2024-02-29", -0.17], ["Blocage: MANQUE SIRET DES SITES", -0.1],
  ["Commentaires: MAIL DE REUNION DE LANCEMENT ENVOYE AU CLIENT", -0.16],
];

export default function App() {
  return (
    <Window>
      <GlobalStyle />
      <TitleBar>
        <TitleIcon><AppIcon /></TitleIcon>
        <TitleText>Project Manager</TitleText>
        <WindowButtons>
          <svg width="12" height="11"><path d="M1 5.500h10" stroke="#8c8c8c" /></svg>
          <svg width="12" height="11" fill="none" stroke="#8c8c8c"><rect x="1" y="2.500" width="8" height="8" rx="1.500" /><path d="M3 .5h6a2 2 0 0 1 2 2v6" /></svg>
          <CloseIcon color="#8c8c8c" />
        </WindowButtons>
      </TitleBar>
      <Content>
        <InfoGrid>
          <Info>2024-03-14 15:41:22</Info>
          <Version>V.1.0.0 2024 ® Developed by: <b>Yann BEN ABDERRAHMANE</b></Version>
          <Welcome>Welcome, <b>n.benabderrahmane</b>! Temperature: 18.0°C, Wind Speed: 10.5km/h, HDD: 0, CDD: 1.0</Welcome>
        </InfoGrid>
        <ButtonGrid>
          {actions.map(([label, bg]) => <Button key={label} $bg={bg}>{label}</Button>)}
          <Button $bg="#800080" $wide $h={43}>Download</Button>
        </ButtonGrid>
        <Search>Search by keyword here...</Search>
        <TableFrame>
          <Viewport>
            <Row $head>
              <RowNumber />
              {columns.map((c) => <HeadCell key={c} $bold={c === "ID"}>{c}</HeadCell>)}
            </Row>
            {records.map((r, i) => <Record key={i} n={i + 1} r={r} />)}
          </Viewport>
          <VScroll><VThumb /></VScroll>
          <HScroll><HThumb /></HScroll>
        </TableFrame>
        <CheckRow><Box />Show Pie Charts</CheckRow>
        <ButtonGrid>
          <Button $bg="#6a5acd">Set Background Image</Button>
          <Button $bg="#808080">Dark Mode</Button>
        </ButtonGrid>
      </Content>

      <Dialog $x={774} $y={260} $w={364} $h={504} $shadow="0 10px 26px rgba(0,0,0,.3)">
        <DialogBar>
          <AppIcon />
          <DialogTitle>Detailed Report</DialogTitle>
          <Help>?</Help>
          <CloseIcon color="#8c8c8c" />
        </DialogBar>
        <ReportBody>
          {report.map(([text, ls]) => <ReportLine key={text} $ls={ls}>{text}</ReportLine>)}
          <ReportLine $ls={-0.18}>Time Spent: <Days>45 days</Days></ReportLine>
          <ReportLine $ls={-0.15}>User: Nacer Edine</ReportLine>
          <ReportLine $ls={-0.1}>Flux: ELEC</ReportLine>
          <ReportLine $ls={0}>Status: EN_COURS</ReportLine>
          <Actions>
            <Button $bg="#008cba">View Map</Button>
            <Button $bg="#008cba">Close</Button>
          </Actions>
        </ReportBody>
      </Dialog>

      <Dialog $x={93} $y={344} $w={660} $h={543} $shadow="0 18px 36px rgba(0,0,0,.45)">
        <DialogBar $active>
          <AppIcon />
          <DialogTitle>Map for SOCIETE DES COMMERCES TOURISTIQUES</DialogTitle>
          <Help>?</Help>
          <CloseIcon color="#000" />
        </DialogBar>
        <MapBody>
          <MapView>
            <MapDrawing />
            <ZoomBox>
              <ZoomKey><svg width="14" height="14"><path d="M7 1v12M1 7h12" stroke="#000" strokeWidth="2" /></svg></ZoomKey>
              <ZoomKey><svg width="14" height="14"><path d="M1 7h12" stroke="#000" strokeWidth="2" /></svg></ZoomKey>
            </ZoomBox>
            <Attribution><Flag /><Anchor>Leaflet</Anchor> | © <Anchor>OpenStreetMap</Anchor> contributors, OpenStreetMap</Attribution>
          </MapView>
        </MapBody>
      </Dialog>
    </Window>
  );
}
